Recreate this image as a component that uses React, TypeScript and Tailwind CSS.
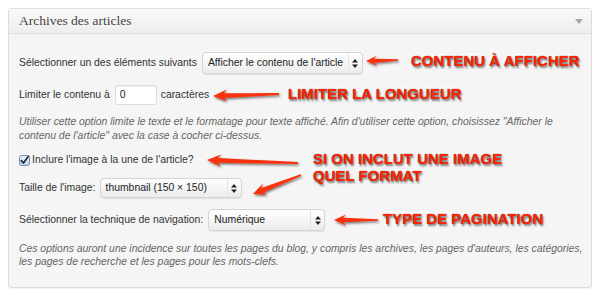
import React from "react";

const SANS = "font-['Liberation_Sans',Arial,sans-serif]";

type Arrow = { tip: [number, number]; tail: [number, number]; hl: number; hw: number; sw: number; tw: number };

const ARROWS: Arrow[] = [
  { tip: [366, 61], tail: [398, 60], hl: 11, hw: 5, sw: 2, tw: 0.8 },
  { tip: [213, 96], tail: [279, 94], hl: 14, hw: 6, sw: 2.4, tw: 0.9 },
  { tip: [207, 160], tail: [298, 163], hl: 14, hw: 6, sw: 2.4, tw: 0.9 },
  { tip: [253, 194], tail: [301, 175], hl: 13, hw: 6, sw: 2.4, tw: 0.9 },
  { tip: [334, 220], tail: [378, 220], hl: 12, hw: 5.5, sw: 2.2, tw: 0.8 },
];

function arrowPoints(a: Arrow) {
  const [tx, ty] = a.tip;
  const [ex, ey] = a.tail;
  const len = Math.hypot(ex - tx, ey - ty);
  const dx = (ex - tx) / len, dy = (ey - ty) / len;
  const nx = -dy, ny = dx;
  const p = (x: number, y: number) => `${x.toFixed(1)},${y.toFixed(1)}`;
  const bx = tx + dx * a.hl, by = ty + dy * a.hl;
  const kx = tx + dx * (a.hl - 3), ky = ty + dy * (a.hl - 3);
  return [
    p(tx, ty),
    p(bx + nx * a.hw, by + ny * a.hw),
    p(kx + nx * a.sw, ky + ny * a.sw),
    p(ex + nx * a.tw, ey + ny * a.tw),
    p(ex - nx * a.tw, ey - ny * a.tw),
    p(kx - nx * a.sw, ky - ny * a.sw),
    p(bx - nx * a.hw, by - ny * a.hw),
  ].join(" ");
}

const LABELS = [
  { text: "CONTENU À AFFICHER", cls: "left-[411px] top-[53px]" },
  { text: "LIMITER LA LONGUEUR", cls: "left-[288px] top-[86px]" },
  { text: "SI ON INCLUT UNE IMAGE", cls: "left-[313px] top-[151px]" },
  { text: "QUEL FORMAT", cls: "left-[313px] top-[168px]" },
  { text: "TYPE DE PAGINATION", cls: "left-[383px] top-[211px]" },
];

function UpDown() {
  return (
    <svg width="6" height="9" viewBox="0 0 6 9">
      <path d="M3 0 L6 3.5 L0 3.5 Z" fill="#222" />
      <path d="M3 9 L6 5.5 L0 5.5 Z" fill="#222" />
    </svg>
  );
}

function Select({ value, w, h }: { value: string; w: string; h: string }) {
  return (
    <div className={`${w} ${h} flex items-center rounded-[4px] border border-[#d4d4d4] bg-gradient-to-b from-white to-[#ececec] shadow-[0_1px_1px_rgba(0,0,0,0.08)]`}>
      <span className="flex-1 pl-[5px] text-[#222] whitespace-nowrap">{value}</span>
      <span className="h-full w-[14px] shrink-0 flex items-center justify-center border-l border-[#e4e4e4]">
        <UpDown />
      </span>
    </div>
  );
}

export default function App() {
  return (
    <div className={`relative w-[600px] h-[295px] bg-white pl-2 pt-2 overflow-hidden ${SANS}`}>
      <div className="w-[584px] h-[280px] border border-[#dcdcdc] rounded-[3px] bg-[#f5f5f5] shadow-[0_1px_1px_rgba(0,0,0,0.05)]">
        {/* header */}
        <div className="h-[25px] flex items-center justify-between pl-[10px] pr-[8px] border-b border-[#dfdfdf] bg-gradient-to-b from-[#f9f9f9] to-[#ededed]">
          <span className="font-['Liberation_Serif',Georgia,serif] text-[13.5px] text-[#464646]">Archives des articles</span>
          <svg width="8" height="5" viewBox="0 0 8 5"><path d="M0 0 H8 L4 5 Z" fill="#a8a8a8" /></svg>
        </div>

        {/* body */}
        <div className="px-[10px] pt-[18px] text-[10.4px] text-[#333]">
          <div className="h-[22px] flex items-center gap-[5px]">
            <span>Sélectionner un des éléments suivants</span>
            <Select value="Afficher le contenu de l'article" w="w-[161px]" h="h-[22px]" />
          </div>

          <div className="mt-[11px] h-[20px] flex items-center">
            <span>Limiter le contenu à</span>
            <div className="ml-[5px] w-[42px] h-[20px] flex items-center pl-[4px] bg-white border border-[#dcdcdc] rounded-[3px] shadow-[inset_0_1px_1px_rgba(0,0,0,0.06)] text-[#222]">0</div>
            <span className="ml-[4px]">caractères</span>
          </div>

          <p className="mt-[10px] leading-[13.5px] italic text-[#666] whitespace-nowrap">
            Utiliser cette option limite le texte et le formatage pour texte affiché. Afin d'utiliser cette option, choisissez "Afficher le
            <br />
            contenu de l'article" avec la case à cocher ci-dessus.
          </p>

          <div className="mt-[11px] h-[14px] flex items-center gap-[2px]">
            <svg width="11" height="11" viewBox="0 0 11 11" className="shrink-0">
              <defs>
                <linearGradient id="cb" x1="0" y1="0" x2="0" y2="1">
                  <stop offset="0" stopColor="#eaf3fb" />
                  <stop offset="1" stopColor="#b9d3ea" />
                </linearGradient>
              </defs>
              <rect x="0.5" y="0.5" width="10" height="10" rx="2" fill="url(#cb)" stroke="#7f8ea3" />
              <path d="M2.3 5.6 L4.5 8 L9.2 1.6" fill="none" stroke="#1d2a3c" strokeWidth="1.7" strokeLinecap="round" strokeLinejoin="round" />
            </svg>
            <span>Inclure l'image à la une de l'article?</span>
          </div>

          <div className="mt-[11px] h-[20px] flex items-center gap-[4px]">
            <span>Taille de l'image:</span>
            <Select value="thumbnail (150 × 150)" w="w-[142px]" h="h-[20px]" />
          </div>

          <div className="mt-[11px] h-[22px] flex items-center gap-[5px]">
            <span>Sélectionner la technique de navigation:</span>
            <Select value="Numérique" w="w-[117px]" h="h-[22px]" />
          </div>

          <p className="mt-[11px] leading-[13px] italic text-[#666] whitespace-nowrap">
            Ces options auront une incidence sur toutes les pages du blog, y compris les archives, les pages d'auteurs, les catégories,
            <br />
            les pages de recherche et les pages pour les mots-clefs.
          </p>
        </div>
      </div>

      {/* annotations */}
      <svg className="absolute left-0 top-0 pointer-events-none" width="600" height="295">
        <defs>
          <filter id="sh" x="-20%" y="-50%" width="140%" height="200%">
            <feDropShadow dx="1" dy="1.5" stdDeviation="1.2" floodColor="#000" floodOpacity="0.55" />
          </filter>
        </defs>
        {ARROWS.map((a, i) => (
          <polygon key={i} points={arrowPoints(a)} fill="#f8300e" filter="url(#sh)" />
        ))}
      </svg>
      {LABELS.map((l) => (
        <span
          key={l.text}
          className={`absolute ${l.cls} whitespace-nowrap text-[15px] leading-[15px] font-bold text-[#ff2200] [-webkit-text-stroke:3.5px_white] [paint-order:stroke_fill] [text-shadow:0_0_1.5px_rgba(0,0,0,0.7),1px_1.5px_2px_rgba(0,0,0,0.5)]`}
        >
          {l.text}
        </span>
      ))}
    </div>
  );
}
